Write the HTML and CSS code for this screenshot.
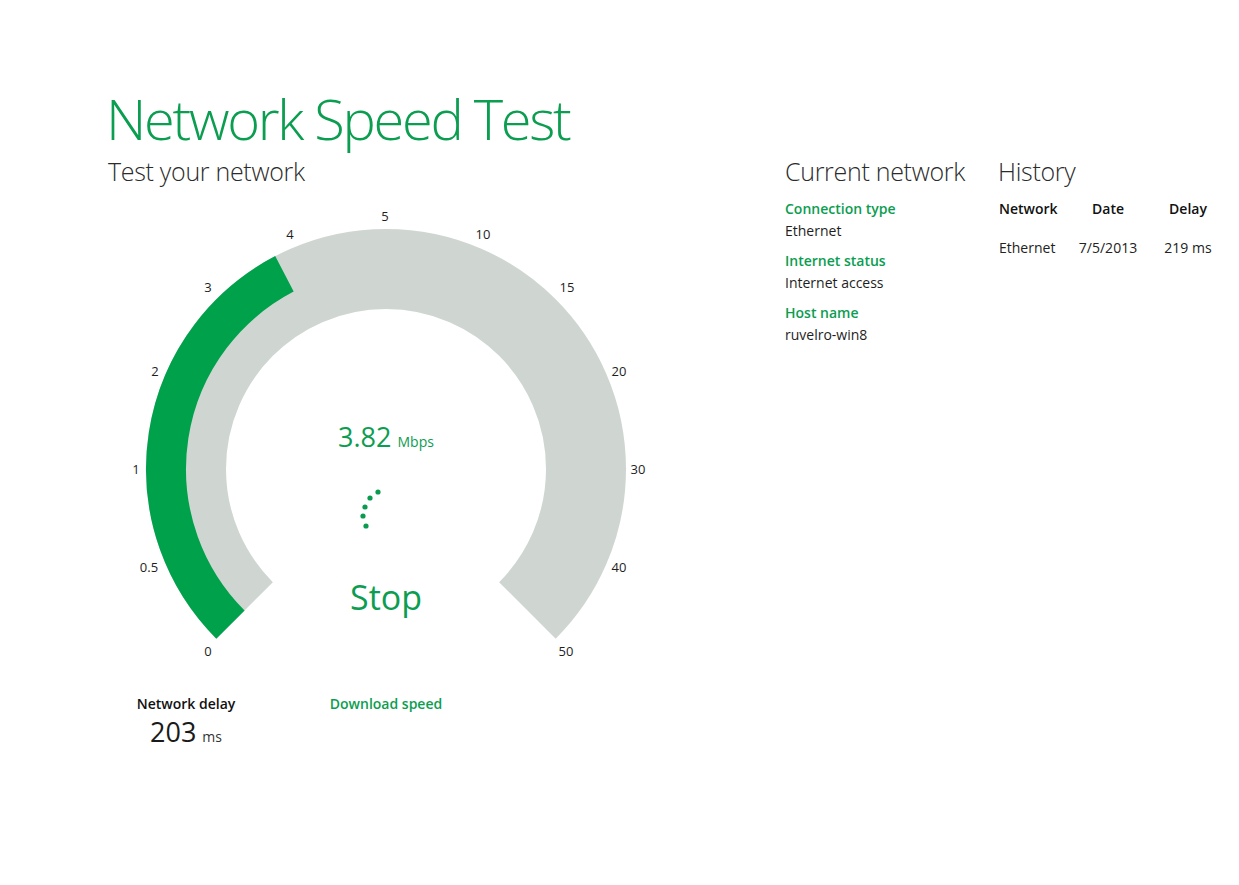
FILE: index.html
```html
<!DOCTYPE html>
<html lang="en">
<head>
<meta charset="utf-8">
<title>Network Speed Test</title>
<link rel="stylesheet" href="styles.css">
</head>
<body>
<main class="page">
  <h1 class="title">Network Speed Test</h1>
  <div class="row">
    <section class="left">
      <h2 class="heading">Test your network</h2>
      <div class="gauge">
        <svg class="gauge-svg" width="560" height="470" viewBox="0 0 560 470">
          <path d="M138.58 410.42 A200 200 0 1 1 421.42 410.42" fill="none" stroke="#cfd6d1" stroke-width="80"/>
          <path d="M124.44 424.56 A220 220 0 0 1 178.43 73.86" fill="none" stroke="#00a14b" stroke-width="40"/>
          <g fill="#0a9a50">
            <circle cx="272" cy="292" r="2.6"/>
            <circle cx="264" cy="298" r="2.6"/>
            <circle cx="259" cy="307" r="2.6"/>
            <circle cx="257" cy="316" r="2.6"/>
            <circle cx="260" cy="326" r="2.6"/>
          </g>
        </svg>
        <span class="tick" style="left:102px;top:451px">0</span>
        <span class="tick" style="left:43px;top:367px">0.5</span>
        <span class="tick" style="left:30px;top:269px">1</span>
        <span class="tick" style="left:49px;top:171px">2</span>
        <span class="tick" style="left:102px;top:87px">3</span>
        <span class="tick" style="left:184px;top:34px">4</span>
        <span class="tick" style="left:279px;top:16px">5</span>
        <span class="tick" style="left:377px;top:34px">10</span>
        <span class="tick" style="left:461px;top:87px">15</span>
        <span class="tick" style="left:513px;top:171px">20</span>
        <span class="tick" style="left:532px;top:269px">30</span>
        <span class="tick" style="left:513px;top:367px">40</span>
        <span class="tick" style="left:460px;top:451px">50</span>
        <div class="speed"><span class="speed-value">3.82</span><span class="speed-unit">Mbps</span></div>
        <div class="stop">Stop</div>
      </div>
      <div class="readouts">
        <div class="readout">
          <div class="readout-label">Network delay</div>
          <div class="readout-value"><span class="big">203</span><span class="unit">ms</span></div>
        </div>
        <div class="readout">
          <div class="readout-label green">Download speed</div>
        </div>
      </div>
    </section>
    <section class="current">
      <h2 class="heading">Current network</h2>
      <dl class="info">
        <dt>Connection type</dt>
        <dd>Ethernet</dd>
        <dt>Internet status</dt>
        <dd>Internet access</dd>
        <dt>Host name</dt>
        <dd>ruvelro-win8</dd>
      </dl>
    </section>
    <section class="history">
      <h2 class="heading">History</h2>
      <div class="table">
        <div class="th left">Network</div>
        <div class="th">Date</div>
        <div class="th">Delay</div>
        <div class="td left">Ethernet</div>
        <div class="td">7/5/2013</div>
        <div class="td">219 ms</div>
      </div>
    </section>
  </div>
</main>
</body>
</html>
```
FILE: styles.css
```css
html, body {
  margin: 0;
  padding: 0;
  background: #ffffff;
}
body {
  font-family: "Open Sans", "Noto Sans", sans-serif;
  color: #1a1a1a;
  overflow: hidden;
}
.page {
  padding: 88px 0 0 106px;
}
.title {
  margin: 0;
  font-weight: 300;
  font-size: 56px;
  line-height: 60px;
  color: #0b9d50;
  letter-spacing: -2.3px;
}
.row {
  display: flex;
  margin-top: 7px;
}
.heading {
  margin: 0;
  font-weight: 300;
  font-size: 25px;
  line-height: 32px;
  letter-spacing: -0.3px;
  color: #2b2b2b;
}
.left {
  width: 679px;
  flex: none;
}
.left .heading {
  padding-left: 2px;
}
.gauge {
  position: relative;
  width: 560px;
  height: 470px;
  margin-top: 13px;
}
.gauge-svg {
  display: block;
}
.tick {
  position: absolute;
  transform: translate(-50%, -50%);
  font-size: 13px;
  line-height: 16px;
  color: #1e1e1e;
}
.speed {
  position: absolute;
  left: 0;
  right: 0;
  top: 219px;
  display: flex;
  justify-content: center;
  align-items: baseline;
  gap: 6px;
  color: #0b9d50;
}
.speed-value {
  font-size: 27px;
  line-height: 36px;
}
.speed-unit {
  font-size: 14px;
}
.stop {
  position: absolute;
  left: 0;
  right: 0;
  top: 373px;
  text-align: center;
  font-size: 34px;
  line-height: 48px;
  color: #0b9d50;
}
.readouts {
  display: flex;
  gap: 40px;
  margin-top: 23px;
}
.readout {
  width: 160px;
  text-align: center;
}
.readout-label {
  font-size: 14px;
  font-weight: 600;
  line-height: 22px;
  color: #111;
}
.readout-label.green {
  color: #0b9d50;
}
.readout-value {
  display: flex;
  justify-content: center;
  align-items: baseline;
  gap: 6px;
}
.big {
  font-size: 27px;
  line-height: 34px;
}
.unit {
  font-size: 14px;
  color: #333;
}
.current {
  width: 213px;
  flex: none;
}
.info {
  margin: 11px 0 0;
}
.info dt {
  font-size: 14px;
  font-weight: 600;
  line-height: 22px;
  color: #0b9d50;
  margin-top: 8px;
}
.info dt:first-child {
  margin-top: 0;
}
.info dd {
  margin: 0;
  font-size: 14px;
  line-height: 22px;
  color: #1e1e1e;
}
.history {
  flex: none;
  width: 232px;
}
.table {
  display: grid;
  grid-template-columns: 71px 76px 84px;
  row-gap: 17px;
  margin-top: 11px;
  margin-left: 1px;
}
.th, .td {
  font-size: 14px;
  line-height: 22px;
  text-align: center;
}
.th {
  font-weight: 600;
  color: #111;
}
.td {
  color: #222;
}
.th.left, .td.left {
  text-align: left;
}
```
